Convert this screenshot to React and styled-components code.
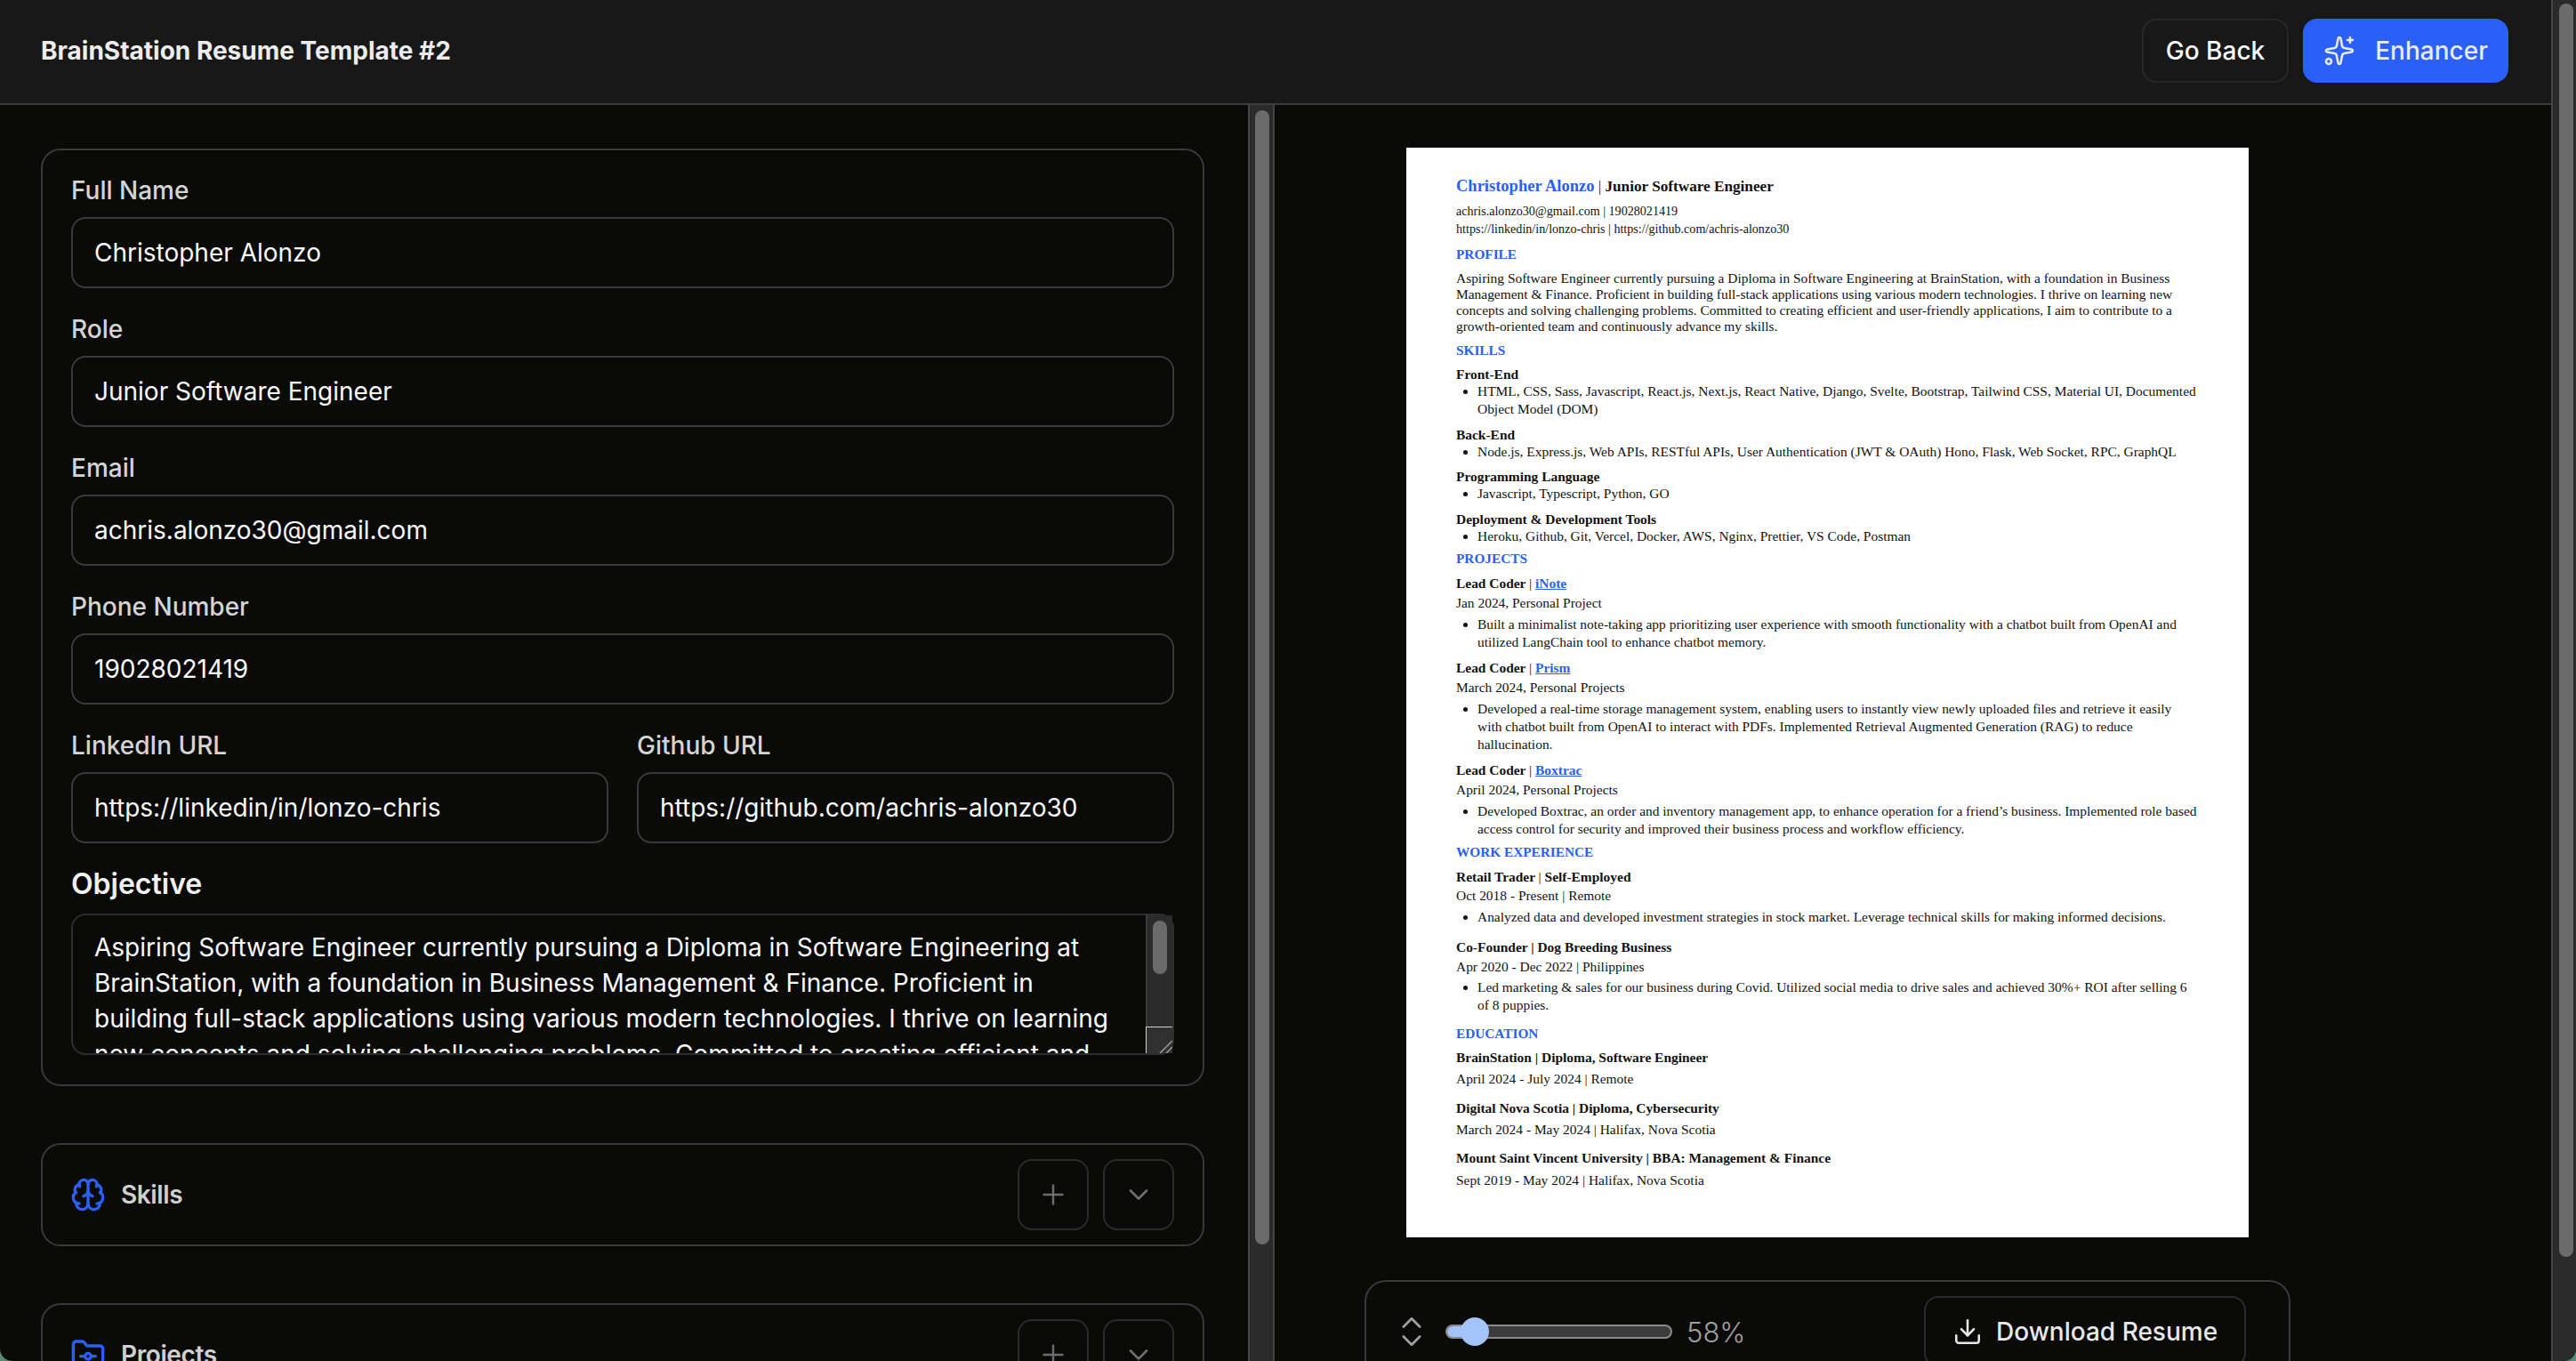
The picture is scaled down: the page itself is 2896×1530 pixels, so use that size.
import React from "react";
import styled, { createGlobalStyle } from "styled-components";
import { Brain, FolderGit, Plus, ChevronDown, ChevronsUpDown, Download, Sparkles } from "lucide-react";

const Global = createGlobalStyle`
  * { box-sizing: border-box; }
  html, body { margin: 0; height: 100%; overflow: hidden; background: #5b8a76; }
  body { font-family: Inter, "Noto Sans", sans-serif; }
`;

const Page = styled.div`
  height: 100vh;
  display: flex;
  overflow: hidden;
  border-radius: 0 0 14px 14px;
  background: #0a0a09;
`;

const ScrollTrack = styled.div`
  flex: none;
  width: ${(p) => p.$width}px;
  padding: ${(p) => p.$pad};
  background: #2b2b2b;
  border-left: 2px solid #444;
  border-right: ${(p) => (p.$edge ? "2px solid #444" : "none")};
`;

const ScrollThumb = styled.div`
  width: 16px;
  background: #6b6b6b;
  border-radius: 8px;
`;

const Shell = styled.div`
  flex: 1;
  min-width: 0;
  display: flex;
  flex-direction: column;
`;

const Header = styled.header`
  flex: none;
  height: 118px;
  display: flex;
  align-items: center;
  justify-content: space-between;
  padding: 0 48px 2px 46px;
  background: #181818;
  border-bottom: 2px solid #3c3c3c;
`;

const Title = styled.h1`
  margin: 0;
  font-size: 28px;
  line-height: 40px;
  font-weight: 700;
  color: #ececec;
`;

const HeaderActions = styled.div`
  display: flex;
  gap: 16px;
`;

const HeaderButton = styled.button`
  height: 72px;
  display: flex;
  align-items: center;
  gap: 22px;
  padding: ${(p) => (p.$primary ? "0 21px" : "0 25px")};
  border-radius: 16px;
  border: 2px solid ${(p) => (p.$primary ? "#2a60f8" : "#2a2727")};
  background: ${(p) => (p.$primary ? "#2a60f8" : "transparent")};
  color: ${(p) => (p.$primary ? "#e9e9ee" : "#fafafa")};
  font: 500 28px Inter, sans-serif;
`;

const Columns = styled.div`
  flex: 1;
  min-height: 0;
  display: flex;
`;

const LeftPane = styled.section`
  flex: none;
  width: 1403px;
  overflow: hidden;
  padding: 49px 49px 0 46px;
`;

const Card = styled.div`
  border: 2px solid #3a3a3a;
  border-radius: 22px;
  margin-bottom: 64px;
`;

const FormCard = styled(Card)`
  padding: 25px 32px 33px;
`;

const Field = styled.label`
  display: block;
  margin-bottom: 26px;
`;

const FieldLabel = styled.span`
  display: block;
  margin-bottom: 10px;
  font-size: 28px;
  line-height: 40px;
  font-weight: 500;
  color: #d4d4d4;
`;

const TextInput = styled.input`
  display: block;
  width: 100%;
  height: 80px;
  padding: 0 24px;
  background: transparent;
  border: 2px solid #3a3a3a;
  border-radius: 16px;
  outline: none;
  color: #fafafa;
  font: 400 28px Inter, sans-serif;
`;

const TwoCols = styled.div`
  display: grid;
  grid-template-columns: 1fr 1fr;
  gap: 32px;
`;

const ObjectiveLabel = styled.label`
  display: block;
  margin-bottom: 13px;
  font-size: 32px;
  line-height: 40px;
  font-weight: 600;
  color: #f0f0f0;
`;

const ObjectiveWrap = styled.div`
  position: relative;
`;

const Objective = styled.textarea`
  display: block;
  width: 100%;
  height: 159px;
  padding: 16px 58px 16px 24px;
  background: transparent;
  border: 2px solid #2e2e2e;
  border-radius: 16px;
  outline: none;
  resize: none;
  overflow: hidden;
  color: #fafafa;
  font: 400 28px/40px Inter, sans-serif;
`;

const AreaScrollbar = styled.div`
  position: absolute;
  top: 2px;
  right: 2px;
  bottom: 2px;
  width: 30px;
  display: flex;
  flex-direction: column;
  background: #2b2b2b;
  border-left: 2px solid #3c3c3c;
`;

const AreaTrack = styled.div`
  flex: 1;
  padding: 6px 6px 0;
`;

const AreaCorner = styled.div`
  flex: none;
  height: 30px;
  margin-left: -2px;
  border-top: 1px solid #d0d0d0;
  border-left: 1px solid #d0d0d0;
  background: #303030;
  display: flex;
  justify-content: flex-end;
  align-items: flex-end;
`;

const SectionRow = styled(Card)`
  display: flex;
  align-items: center;
  gap: 17px;
  height: 116px;
  padding: 0 32px 0 31px;
  color: #2a60f8;
`;

const SectionName = styled.span`
  flex: 1;
  font-size: 28px;
  line-height: 40px;
  font-weight: 600;
  letter-spacing: -0.4px;
  color: #d0d0d0;
`;

const SquareButton = styled.button`
  width: 80px;
  height: 80px;
  display: flex;
  align-items: center;
  justify-content: center;
  padding: 0;
  background: transparent;
  border: 2px solid #2b2b2b;
  border-radius: 16px;
  color: #6e6e6e;
  & + & { margin-left: -1px; }
`;

const RightPane = styled.section`
  flex: 1;
  min-width: 0;
  overflow: hidden;
  padding: 48px 192px 0 0;
  display: flex;
  flex-direction: column;
  align-items: center;
`;

const Paper = styled.article`
  flex: none;
  width: 947px;
  height: 1225px;
  padding: 31px 56px 0;
  background: #fff;
  color: #111;
  font-family: "Liberation Serif", "Times New Roman", serif;
  font-size: 15.45px;
`;

const NameLine = styled.div`
  font-size: 17.2px;
  line-height: 24px;
  font-weight: 700;
`;

const Accent = styled.span`
  font-size: 18.5px;
  color: #2a60f8;
`;

const Thin = styled.span`
  font-weight: 400;
`;

const Plain = styled.div`
  line-height: 20px;
  margin-top: ${(p) => p.$mt || 0}px;
  font-size: ${(p) => (p.$small ? "14.1px" : "15.45px")};
`;

const Heading = styled.h2`
  margin: ${(p) => p.$mt}px 0 0;
  font-size: 15.3px;
  line-height: 20px;
  font-weight: 700;
  color: #2a60f8;
`;

const Para = styled.p`
  margin: 8px 0 0;
  line-height: 18px;
`;

const Sub = styled.h3`
  margin: ${(p) => p.$mt}px 0 0;
  font-size: 15.45px;
  line-height: 18px;
  font-weight: 700;
`;

const Bullets = styled.ul`
  margin: ${(p) => p.$mt || 0}px 0 0;
  padding-left: 24px;
  line-height: 20px;
`;

const Link = styled.a`
  color: #2a60f8;
  text-decoration: underline;
`;

const ControlBar = styled.div`
  flex: none;
  width: 1041px;
  height: 116px;
  margin-top: 48px;
  display: flex;
  align-items: center;
  justify-content: space-between;
  padding: 0 48px 0 29px;
  border: 2px solid #3a3a3a;
  border-radius: 24px;
`;

const ZoomGroup = styled.div`
  display: flex;
  align-items: center;
  gap: 16px;
  color: #a0a0a0;
`;

const Track = styled.div`
  position: relative;
  width: 255px;
  height: 16px;
  border: 2px solid #8a8a8a;
  border-radius: 8px;
  background: #3c3c3c;
`;

const TrackFill = styled.div`
  height: 100%;
  background: #a2c4f8;
  border-radius: 6px 0 0 6px;
`;

const TrackThumb = styled.div`
  position: absolute;
  top: -10px;
  width: 32px;
  height: 32px;
  border-radius: 50%;
  background: #a2c4f8;
`;

const Percent = styled.span`
  font-size: 31px;
  font-weight: 300;
  color: #a0a0a0;
`;

const DownloadButton = styled.button`
  width: 362px;
  height: 80px;
  display: flex;
  align-items: center;
  gap: 15px;
  padding: 0 0 0 30px;
  background: transparent;
  border: 2px solid #2b2b2b;
  border-radius: 16px;
  color: #e8e8e8;
  font: 500 28px Inter, sans-serif;
`;

const objective =
  "Aspiring Software Engineer currently pursuing a Diploma in Software Engineering at BrainStation, with a foundation in Business Management & Finance. Proficient in building full-stack applications using various modern technologies. I thrive on learning new concepts and solving challenging problems. Committed to creating efficient and user-friendly applications, I aim to contribute to a growth-oriented team and continuously advance my skills.";

const sections = [
  { name: "Skills", Icon: Brain },
  { name: "Projects", Icon: FolderGit },
];

export default function App() {
  return (
    <Page>
      <Global />
      <Shell>
        <Header>
          <Title>BrainStation Resume Template #2</Title>
          <HeaderActions>
            <HeaderButton>Go Back</HeaderButton>
            <HeaderButton $primary>
              <Sparkles size={36} strokeWidth={1.7} />
              Enhancer
            </HeaderButton>
          </HeaderActions>
        </Header>
        <Columns>
          <LeftPane>
            <FormCard>
              <Field>
                <FieldLabel>Full Name</FieldLabel>
                <TextInput readOnly value="Christopher Alonzo" />
              </Field>
              <Field>
                <FieldLabel>Role</FieldLabel>
                <TextInput readOnly value="Junior Software Engineer" />
              </Field>
              <Field>
                <FieldLabel>Email</FieldLabel>
                <TextInput readOnly value="achris.alonzo30@gmail.com" />
              </Field>
              <Field>
                <FieldLabel>Phone Number</FieldLabel>
                <TextInput readOnly value="19028021419" />
              </Field>
              <TwoCols>
                <Field>
                  <FieldLabel>LinkedIn URL</FieldLabel>
                  <TextInput readOnly value="https://linkedin/in/lonzo-chris" />
                </Field>
                <Field>
                  <FieldLabel>Github URL</FieldLabel>
                  <TextInput readOnly value="https://github.com/achris-alonzo30" />
                </Field>
              </TwoCols>
              <ObjectiveLabel>Objective</ObjectiveLabel>
              <ObjectiveWrap>
                <Objective readOnly value={objective} />
                <AreaScrollbar>
                  <AreaTrack>
                    <ScrollThumb style={{ height: 60 }} />
                  </AreaTrack>
                  <AreaCorner>
                    <svg width="16" height="16" viewBox="0 0 16 16" stroke="#9a9a9a" strokeWidth="1.5">
                      <path d="M2 16 16 2M9 16l7-7" />
                    </svg>
                  </AreaCorner>
                </AreaScrollbar>
              </ObjectiveWrap>
            </FormCard>
            {sections.map(({ name, Icon }) => (
              <SectionRow key={name}>
                <Icon size={40} strokeWidth={2} />
                <SectionName>{name}</SectionName>
                <SquareButton>
                  <Plus size={36} strokeWidth={1.6} />
                </SquareButton>
                <SquareButton>
                  <ChevronDown size={36} strokeWidth={1.8} />
                </SquareButton>
              </SectionRow>
            ))}
          </LeftPane>
          <ScrollTrack $width={30} $pad="6px 4px 0 6px" $edge>
            <ScrollThumb style={{ height: 1275 }} />
          </ScrollTrack>
          <RightPane>
            <Paper>
              <NameLine>
                <Accent>Christopher Alonzo</Accent> <Thin>|</Thin> Junior Software Engineer
              </NameLine>
              <Plain $small $mt={5}>achris.alonzo30@gmail.com | 19028021419</Plain>
              <Plain $small>https://linkedin/in/lonzo-chris | https://github.com/achris-alonzo30</Plain>

              <Heading $mt={9}>PROFILE</Heading>
              <Para>{objective}</Para>

              <Heading $mt={8}>SKILLS</Heading>
              <Sub $mt={8}>Front-End</Sub>
              <Bullets>
                <li>HTML, CSS, Sass, Javascript, React.js, Next.js, React Native, Django, Svelte, Bootstrap, Tailwind CSS, Material UI, Documented Object Model (DOM)</li>
              </Bullets>
              <Sub $mt={10}>Back-End</Sub>
              <Bullets>
                <li>Node.js, Express.js, Web APIs, RESTful APIs, User Authentication (JWT &amp; OAuth) Hono, Flask, Web Socket, RPC, GraphQL</li>
              </Bullets>
              <Sub $mt={9}>Programming Language</Sub>
              <Bullets>
                <li>Javascript, Typescript, Python, GO</li>
              </Bullets>
              <Sub $mt={10}>Deployment &amp; Development Tools</Sub>
              <Bullets>
                <li>Heroku, Github, Git, Vercel, Docker, AWS, Nginx, Prettier, VS Code, Postman</li>
              </Bullets>

              <Heading $mt={5}>PROJECTS</Heading>
              <Sub $mt={9}>Lead Coder <Thin>|</Thin> <Link href="#inote">iNote</Link></Sub>
              <Plain $mt={3}>Jan 2024, Personal Project</Plain>
              <Bullets $mt={4}>
                <li>Built a minimalist note-taking app prioritizing user experience with smooth functionality with a chatbot built from OpenAI and utilized LangChain tool to enhance chatbot memory.</li>
              </Bullets>
              <Sub $mt={10}>Lead Coder <Thin>|</Thin> <Link href="#prism">Prism</Link></Sub>
              <Plain $mt={3}>March 2024, Personal Projects</Plain>
              <Bullets $mt={4}>
                <li>Developed a real-time storage management system, enabling users to instantly view newly uploaded files and retrieve it easily with chatbot built from OpenAI to interact with PDFs. Implemented Retrieval Augmented Generation (RAG) to reduce hallucination.</li>
              </Bullets>
              <Sub $mt={10}>Lead Coder <Thin>|</Thin> <Link href="#boxtrac">Boxtrac</Link></Sub>
              <Plain $mt={3}>April 2024, Personal Projects</Plain>
              <Bullets $mt={4}>
                <li>Developed Boxtrac, an order and inventory management app, to enhance operation for a friend’s business. Implemented role based access control for security and improved their business process and workflow efficiency.</li>
              </Bullets>

              <Heading $mt={6}>WORK EXPERIENCE</Heading>
              <Sub $mt={9}>Retail Trader <Thin>|</Thin> Self-Employed</Sub>
              <Plain $mt={2}>Oct 2018 - Present | Remote</Plain>
              <Bullets $mt={4}>
                <li>Analyzed data and developed investment strategies in stock market. Leverage technical skills for making informed decisions.</li>
              </Bullets>
              <Sub $mt={15}>Co-Founder | Dog Breeding Business</Sub>
              <Plain $mt={3}>Apr 2020 - Dec 2022 | Philippines</Plain>
              <Bullets $mt={3}>
                <li>Led marketing &amp; sales for our business during Covid. Utilized social media to drive sales and achieved 30%+ ROI after selling 6 of 8 puppies.</li>
              </Bullets>

              <Heading $mt={12}>EDUCATION</Heading>
              <Sub $mt={8}>BrainStation | Diploma, Software Engineer</Sub>
              <Plain $mt={5}>April 2024 - July 2024 | Remote</Plain>
              <Sub $mt={14}>Digital Nova Scotia | Diploma, Cybersecurity</Sub>
              <Plain $mt={5}>March 2024 - May 2024 | Halifax, Nova Scotia</Plain>
              <Sub $mt={13}>Mount Saint Vincent University | BBA: Management &amp; Finance</Sub>
              <Plain $mt={6}>Sept 2019 - May 2024 | Halifax, Nova Scotia</Plain>
            </Paper>
            <ControlBar>
              <ZoomGroup>
                <ChevronsUpDown size={44} strokeWidth={1.5} />
                <Track>
                  <TrackFill style={{ width: 32 }} />
                  <TrackThumb style={{ left: 15 }} />
                </Track>
                <Percent>58%</Percent>
              </ZoomGroup>
              <DownloadButton>
                <Download size={34} strokeWidth={1.8} />
                Download Resume
              </DownloadButton>
            </ControlBar>
          </RightPane>
        </Columns>
      </Shell>
      <ScrollTrack $width={28} $pad="4px 3px 0 7px">
        <ScrollThumb style={{ height: 1409 }} />
      </ScrollTrack>
    </Page>
  );
}
